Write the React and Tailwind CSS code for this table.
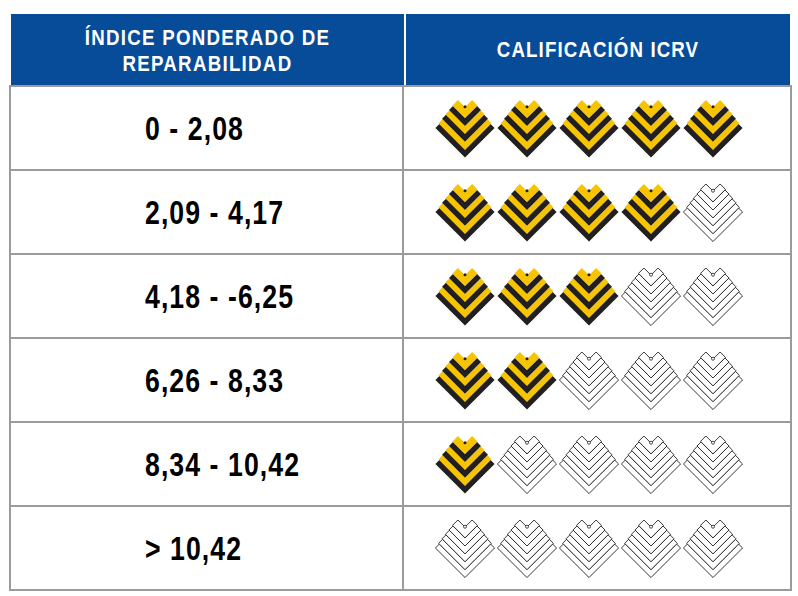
import React from "react";

const YELLOW = "#f6c400";
const BLACK = "#231f20";

function bandPoints(cx, v, h, s) {
  const a = s / (2 * Math.SQRT2);
  const pts = [
    [cx - h - a, v - h + a],
    [cx, v + 2 * a],
    [cx + h + a, v - h + a],
    [cx + h - a, v - h - a],
    [cx, v - 2 * a],
    [cx - h + a, v - h - a],
  ];
  return pts.map((p) => p.map((n) => n.toFixed(2)).join(",")).join(" ");
}

const CX = 30;
const HEART_S = 7.6;
const HEART_V = 12.5;
// heart + 5 chevrons: [v, h, s, colorIndex]
const BANDS = [
  [HEART_V, 9.8, HEART_S, 0],
  [22.0, 14, 5.6, 1],
  [29.9, 17.6, 5.6, 0],
  [37.8, 21, 5.6, 1],
  [45.7, 24.4, 5.6, 0],
  [53.6, 27.6, 5.6, 1],
];

function Icon({ filled }) {
  const heartA = HEART_S / (2 * Math.SQRT2);
  return (
    <svg width="62" height="62" viewBox="-1 -2 62 62" className="shrink-0">
      {BANDS.slice()
        .reverse()
        .map(([v, h, s, c], i) => (
          <polygon
            key={i}
            points={bandPoints(CX, v, h, s)}
            fill={filled ? (c === 0 ? YELLOW : BLACK) : "#fff"}
            stroke={filled ? "none" : BLACK}
            strokeWidth={filled ? 0 : 0.9}
          />
        ))}
      <circle
        cx={CX}
        cy={HEART_V - 2 * heartA - 0.4}
        r="1.5"
        fill={filled ? BLACK : "#fff"}
        stroke={filled ? "none" : BLACK}
        strokeWidth={filled ? 0 : 0.8}
      />
    </svg>
  );
}

const rows = [
  { label: "0 - 2,08", n: 5 },
  { label: "2,09 - 4,17", n: 4 },
  { label: "4,18 - -6,25", n: 3 },
  { label: "6,26 - 8,33", n: 2 },
  { label: "8,34 - 10,42", n: 1 },
  { label: "> 10,42", n: 0 },
];

export default function App() {
  return (
    <div className="w-[798px] h-[596px] bg-white pt-[14px] pl-[9px] font-['Liberation_Sans',Arial,sans-serif]">
      <div className="w-[783px]">
        <div className="mx-[2px] grid grid-cols-[393px_2px_384px] h-[71px]">
          <div className="bg-[#064c99] flex items-center justify-center text-white font-bold text-[22px] leading-[26px] tracking-[1.5px] text-center pt-[2px]">
            <span className="inline-block whitespace-nowrap scale-x-[0.85] origin-center">
              ÍNDICE PONDERADO DE
              <br />
              REPARABILIDAD
            </span>
          </div>
          <div className="bg-white" />
          <div className="bg-[#064c99] flex items-center justify-center text-white font-bold text-[22px] leading-[26px] tracking-[1.3px] pt-[1px]">
            <span className="inline-block whitespace-nowrap scale-x-[0.85] origin-center">
              CALIFICACIÓN ICRV
            </span>
          </div>
        </div>
        <div className="border-2 border-[#9b9b9b]">
          {rows.map((r, i) => (
            <div
              key={i}
              className={
                "grid grid-cols-[393px_386px] " +
                (i < rows.length - 1 ? "h-[84px] border-b-2 border-[#9b9b9b]" : "h-[82px]")
              }
            >
              <div className="border-r-2 border-[#9b9b9b] flex items-center pl-[134px] text-black font-bold text-[32.5px] tracking-[1.3px] pt-[2px]">
                <span className="inline-block whitespace-nowrap scale-x-[0.82] origin-left">
                  {r.label}
                </span>
              </div>
              <div className="flex items-center pl-[30px] pt-[1px]">
                {[0, 1, 2, 3, 4].map((k) => (
                  <Icon key={k} filled={k < r.n} />
                ))}
              </div>
            </div>
          ))}
        </div>
      </div>
    </div>
  );
}
